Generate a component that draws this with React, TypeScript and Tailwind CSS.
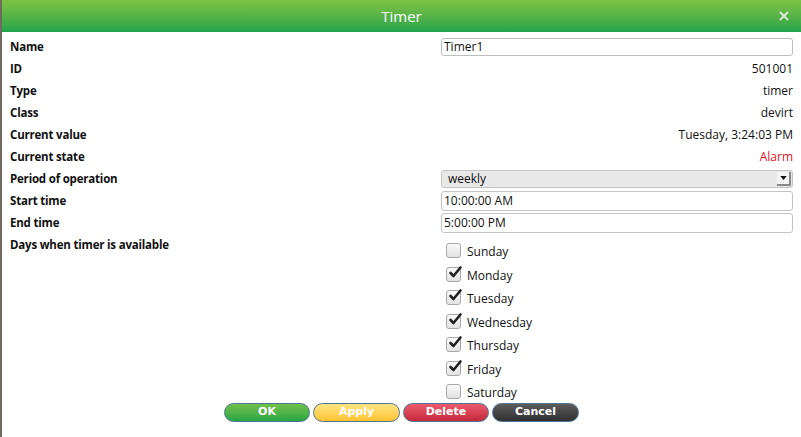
import React, { useState } from "react";

const font = { fontFamily: '"Open Sans", "Noto Sans", sans-serif' };

interface IRow {
  label: string;
  children: React.ReactNode;
}

function Row({ label, children }: IRow) {
  return (
    <div className="flex h-[22px] items-center">
      <div className="w-[439px] shrink-0 pl-[8px] text-[11.5px] font-bold text-[#111] tracking-[-0.2px]">
        {label}
      </div>
      <div className="flex-1 pr-[8px] text-right text-[12px] text-[#111]">{children}</div>
    </div>
  );
}

const days = [
  { name: "Sunday", on: false },
  { name: "Monday", on: true },
  { name: "Tuesday", on: true },
  { name: "Wednesday", on: true },
  { name: "Thursday", on: true },
  { name: "Friday", on: true },
  { name: "Saturday", on: false },
];

function Check({ on }: { on: boolean }) {
  return (
    <div className="relative h-[15px] w-[15px] rounded-[3px] border border-[#a8a8a8] bg-gradient-to-b from-[#fafafa] to-[#e2e2e2]">
      {on && (
        <svg viewBox="0 0 15 15" className="absolute -top-[3px] left-[1px] h-[15px] w-[15px]">
          <path d="M2.5 8 L5.5 11 L12.5 2.5" fill="none" stroke="#222" strokeWidth="2.6" strokeLinecap="round" strokeLinejoin="round" />
        </svg>
      )}
    </div>
  );
}

export default function App() {
  const [name, setName] = useState("Timer1");
  const [checked, setChecked] = useState(days.map((d) => d.on));

  return (
    <div className="flex h-[437px] w-[801px] bg-[#7a6e5e]" style={font}>
      <div className="w-[2px] shrink-0 bg-[#6f6a62]" />
      <div className="flex flex-1 flex-col bg-white">
        {/* header */}
        <div className="relative flex h-[32px] items-center justify-center bg-gradient-to-b from-[#7dc243] to-[#1ca44b]">
          <span className="text-[15px] text-white">Timer</span>
          <svg viewBox="0 0 10 10" className="absolute right-[12px] top-[11px] h-[10px] w-[10px]">
            <path d="M1 1 L9 9 M9 1 L1 9" stroke="#fff" strokeWidth="1.7" />
          </svg>
        </div>

        <div className="flex flex-col pt-[4px]">
          <Row label="Name">
            <input
              value={name}
              onChange={(e: any) => setName(e.target.value)}
              className="h-[18px] w-full rounded-[3px] border border-[#bdbdbd] px-[2px] text-left text-[12px] leading-none outline-none"
              style={font}
            />
          </Row>
          <Row label="ID">501001</Row>
          <Row label="Type">timer</Row>
          <Row label="Class">devirt</Row>
          <Row label="Current value">Tuesday, 3:24:03 PM</Row>
          <Row label="Current state">
            <span className="text-[#e0141e]">Alarm</span>
          </Row>
          <Row label="Period of operation">
            <div className="flex h-[18px] w-full items-center rounded-[3px] border border-[#c4c4c4] bg-[#e8e8e8] pl-[6px] text-left">
              <span className="flex-1">weekly</span>
              <div className="mr-[1px] flex h-[14px] w-[14px] items-center justify-center border-r-2 border-b-2 border-[#8a8a8a] bg-[#f4f4f4]">
                <svg viewBox="0 0 8 5" className="h-[4px] w-[7px]">
                  <path d="M0 0 H8 L4 5 Z" fill="#111" />
                </svg>
              </div>
            </div>
          </Row>
          <Row label="Start time">
            <div className="h-[20px] w-full rounded-[3px] border border-[#c4c4c4] pl-[2px] text-left leading-[18px]">10:00:00 AM</div>
          </Row>
          <Row label="End time">
            <div className="h-[20px] w-full rounded-[3px] border border-[#c4c4c4] pl-[2px] text-left leading-[18px]">5:00:00 PM</div>
          </Row>
          <div className="flex">
            <div className="w-[439px] shrink-0 pl-[8px] pt-[2px] text-[11.5px] font-bold text-[#111] tracking-[-0.2px]">
              Days when timer is available
            </div>
            <div className="flex flex-col pl-[5px] pt-[5px]">
              {days.map((d, i) => (
                <div
                  key={d.name}
                  className="flex h-[23.5px] cursor-pointer items-center gap-[6px]"
                  onClick={() => setChecked(checked.map((c, j) => (j === i ? !c : c)))}
                >
                  <Check on={checked[i]} />
                  <span className="pt-[3px] text-[12px] text-[#111]">{d.name}</span>
                </div>
              ))}
            </div>
          </div>
        </div>

        {/* buttons */}
        <div className="-mt-[1px] flex justify-center gap-[3px]" style={{ fontFamily: '"DejaVu Sans", Verdana, sans-serif' }}>
          <button className="h-[19px] w-[86px] rounded-full border border-[#4d7595] bg-gradient-to-b from-[#6fc14a] to-[#25a544] text-[11px] font-bold text-white">OK</button>
          <button className="h-[19px] w-[87px] rounded-full border border-[#4d7595] bg-gradient-to-b from-[#ffe580] to-[#ffc32c] text-[11px] font-bold text-white">Apply</button>
          <button className="h-[19px] w-[86px] rounded-full border border-[#4d7595] bg-gradient-to-b from-[#ec5a6e] to-[#c4283a] text-[11px] font-bold text-white">Delete</button>
          <button className="h-[19px] w-[87px] rounded-full border border-[#4d7595] bg-gradient-to-b from-[#5c5c5c] to-[#303030] text-[11px] font-bold text-white">Cancel</button>
        </div>
      </div>
    </div>
  );
}
